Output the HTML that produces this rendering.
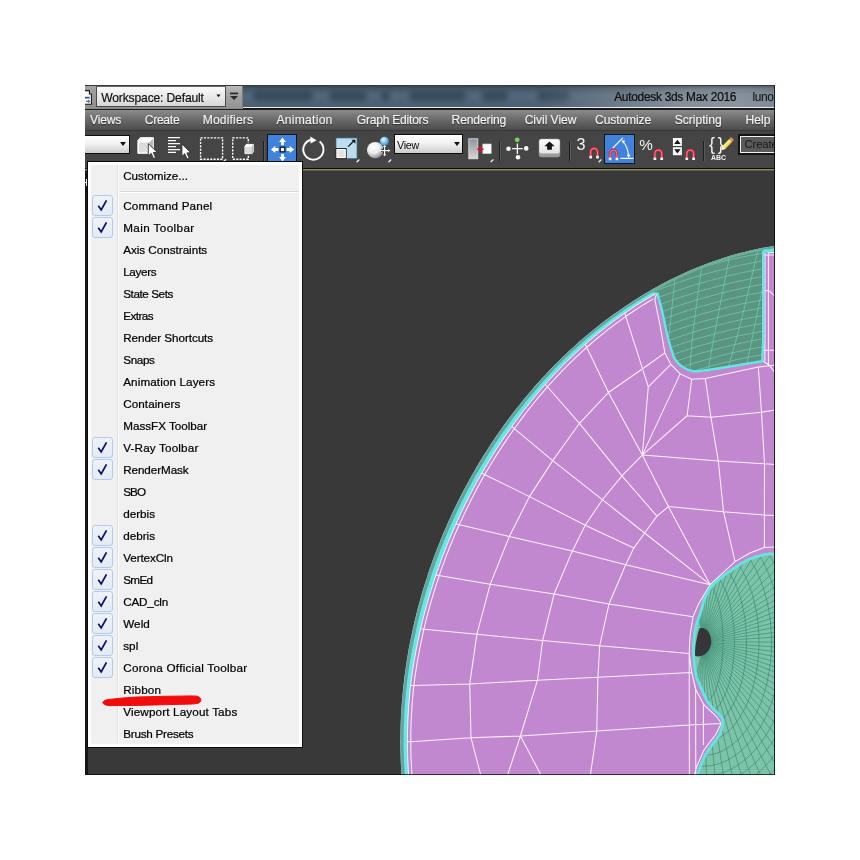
<!DOCTYPE html>
<html><head><meta charset="utf-8"><title>3ds Max toolbar menu</title>
<style>
html,body{margin:0;padding:0;background:#fff;}
body{width:860px;height:860px;position:relative;overflow:hidden;font-family:"Liberation Sans",sans-serif;font-size:12px;}
#app{position:absolute;left:85px;top:85px;width:690px;height:690px;overflow:hidden;background:#393939;}
#vp{position:absolute;left:0;top:0;}
.abs{position:absolute;}
/* title bar */
#title{position:absolute;left:0;top:0;width:690px;height:22px;background:linear-gradient(#4a5d6f,#50667a 50%,#43566a);overflow:hidden;}
#title .blob{position:absolute;top:6px;height:11px;background:#34475a;border-radius:5px;filter:blur(2.5px);opacity:.9}
#title .glow{position:absolute;left:455px;top:0;width:235px;height:22px;background:linear-gradient(to right,rgba(120,132,144,0) 0,rgba(120,132,144,.55) 28%,rgba(132,142,152,.92) 60%,rgba(136,146,155,.95) 85%,rgba(126,137,147,.9) 100%);}
#title .shade{position:absolute;left:158px;top:0;width:532px;height:22px;background:linear-gradient(rgba(20,28,36,.45) 0,rgba(20,28,36,.12) 18%,rgba(0,0,0,0) 40%,rgba(255,255,255,.06) 100%);}
#ttext{position:absolute;top:5px;color:#0b0b0b;-webkit-text-stroke:0.2px #0b0b0b;font-size:11.9px;white-space:nowrap;}
#tleft{position:absolute;left:0;top:0;width:158px;height:23.5px;background:linear-gradient(#a3a3a3,#8e8e8e);}
#topline{position:absolute;left:0;top:0;width:690px;height:1.3px;background:#33393f;}
#ws{position:absolute;left:11px;top:1px;width:130.4px;height:21.4px;background:linear-gradient(#fafafa,#e9e9e9 50%,#d6d6d6);border:1px solid #4a4a4a;border-top-color:#6a6a6a;box-sizing:border-box;border-radius:1px;}
#ws span{-webkit-text-stroke:0.2px #111;position:absolute;left:4.2px;top:3.8px;color:#111;white-space:nowrap;font-size:12.1px;}
#qa{position:absolute;left:141.4px;top:1px;width:16.4px;height:22px;background:linear-gradient(#b9b9b9,#a0a0a0 50%,#939393);border-right:1px solid #7a7a7a;box-sizing:border-box;}
#tline1{position:absolute;left:158px;top:21.5px;width:532px;height:1.3px;background:#e8ecef;}
#tline2{position:absolute;left:0;top:23px;width:690px;height:2px;background:#1a1a1a;}
/* menubar */
#menubar{position:absolute;left:0;top:25px;width:690px;height:20px;background:linear-gradient(#8c8c8c,#6c6c6c 45%,#4c4c4c);}
#menubar span{-webkit-text-stroke:0.15px #f4f4f4;position:absolute;top:3px;color:#f4f4f4;white-space:nowrap;font-size:12.1px;text-shadow:0 1px 1px rgba(0,0,0,.55);}
/* toolbar */
#toolbar{position:absolute;left:0;top:44.6px;width:690px;height:38.4px;background:#454545;border-top:1px solid #383838;box-sizing:border-box;}
#tbl1{position:absolute;left:0;top:83px;width:690px;height:1px;background:#0c0c0c;}
#tbl2{position:absolute;left:0;top:84px;width:690px;height:2px;background:linear-gradient(#a8a27c,#4a4620);}
.dd{position:absolute;background:linear-gradient(#ffffff,#f2f2f2 45%,#cdcdcd);border:1.9px solid #0d0d0d;border-right-width:1.2px;border-bottom-width:1.2px;box-sizing:border-box;height:20px;top:49.1px;}
.dd i{position:absolute;right:2.4px;top:6.6px;width:0;height:0;border-left:3.8px solid transparent;border-right:3.8px solid transparent;border-top:4.6px solid #111;}
.sep{position:absolute;top:56px;width:1px;height:20px;background:#1e1e1e;box-shadow:1px 0 0 #5a5a5a;}
.blue{position:absolute;background:#3f83dc;border:1.6px solid #141414;border-right-width:0.6px;box-sizing:border-box;}
/* popup */
#popup{position:absolute;left:3px;top:77px;width:214px;height:585px;background:#f0f0f0;border:1px solid #fff;box-sizing:border-box;box-shadow:0 0 0 1px #0c0c0c, inset 0 0 0 1.6px #fff, inset 0 0 2px 2px rgba(255,255,255,.7);}
#popup .gut{position:absolute;left:28px;top:2px;width:1px;height:579px;background:#e0e0e0;box-shadow:1px 0 0 #fff;}
#popup .hr{position:absolute;left:31px;top:28px;width:179px;height:1px;background:#d7d7d7;box-shadow:0 1px 0 #fff;}
.mi{position:absolute;left:34.2px;color:#000;-webkit-text-stroke:0.22px #000;white-space:nowrap;font-size:11.7px;line-height:14px;}
.ck{position:absolute;left:3px;width:21px;height:21px;border:1px solid #b3cbe8;border-radius:3px;box-sizing:border-box;background:linear-gradient(#eff3f9,#e4ebf6);}
.ck svg{position:absolute;left:0;top:0;}
</style></head><body>
<svg id="vp" width="860" height="860" viewBox="0 0 860 860">
<defs><clipPath id="cv"><rect x="85" y="171" width="690" height="604"/></clipPath>
<clipPath id="cdisc"><path d="M795.7,243.3 L791.0,243.8 L786.4,244.3 L781.7,244.8 L777.0,245.5 L772.4,246.2 L767.7,247.0 L763.1,247.8 L758.5,248.7 L753.9,249.7 L749.3,250.8 L744.7,251.9 L740.1,253.1 L735.6,254.3 L731.0,255.6 L726.5,257.0 L722.0,258.4 L717.5,259.9 L713.1,261.5 L708.6,263.1 L704.2,264.8 L699.8,266.5 L695.4,268.3 L691.1,270.1 L686.7,272.0 L682.4,274.0 L678.1,276.0 L673.9,278.0 L669.6,280.1 L665.4,282.3 L661.2,284.5 L657.1,286.7 L652.9,289.1 L648.8,291.4 L644.7,293.8 L640.7,296.3 L636.7,298.7 L632.7,301.3 L628.7,303.9 L624.8,306.5 L620.9,309.2 L617.0,311.9 L613.1,314.6 L609.3,317.4 L605.5,320.3 L601.8,323.1 L598.1,326.0 L594.4,329.0 L590.7,332.0 L587.1,335.0 L583.5,338.0 L579.9,341.1 L576.4,344.3 L572.9,347.4 L569.4,350.6 L566.0,353.9 L562.6,357.1 L559.2,360.4 L555.9,363.7 L552.6,367.1 L549.3,370.5 L546.1,373.9 L542.9,377.3 L539.7,380.8 L536.6,384.3 L533.5,387.8 L530.4,391.4 L527.4,395.0 L524.4,398.6 L521.4,402.2 L518.5,405.9 L515.6,409.6 L512.7,413.3 L509.9,417.0 L507.1,420.8 L504.3,424.6 L501.6,428.4 L498.9,432.2 L496.3,436.1 L493.6,439.9 L491.0,443.8 L488.5,447.7 L486.0,451.7 L483.5,455.6 L481.0,459.6 L478.6,463.6 L476.2,467.6 L473.9,471.7 L471.6,475.7 L469.3,479.8 L467.0,483.9 L464.8,488.0 L462.7,492.1 L460.5,496.2 L458.4,500.4 L456.4,504.6 L454.3,508.8 L452.3,513.0 L450.4,517.2 L448.4,521.5 L446.6,525.7 L444.7,530.0 L442.9,534.3 L441.1,538.6 L439.4,542.9 L437.6,547.2 L436.0,551.6 L434.3,555.9 L432.7,560.3 L431.2,564.7 L429.6,569.1 L428.1,573.5 L426.7,577.9 L425.3,582.3 L423.9,586.8 L422.5,591.2 L421.2,595.7 L420.0,600.2 L418.7,604.7 L417.5,609.2 L416.4,613.7 L415.3,618.2 L414.2,622.7 L413.2,627.3 L412.2,631.8 L411.2,636.4 L410.3,641.0 L409.4,645.5 L408.5,650.1 L407.7,654.7 L407.0,659.3 L406.3,663.9 L405.6,668.6 L404.9,673.2 L404.3,677.8 L403.8,682.4 L403.2,687.1 L402.8,691.7 L402.3,696.4 L401.9,701.0 L401.6,705.7 L401.3,710.4 L401.0,715.0 L400.8,719.7 L400.6,724.4 L400.5,729.0 L400.4,733.7 L400.3,738.4 L400.3,743.1 L400.3,747.8 L400.4,752.4 L400.6,757.1 L400.7,761.8 L401.0,766.5 L401.2,771.2 L401.5,775.9 L401.9,780.5 L402.3,785.2 L402.8,789.9 L403.3,794.5 L403.8,799.2 L790.0,790.0Z"/></clipPath>
<clipPath id="cinner"><path d="M790.0,553.0 L788.8,553.1 L787.2,553.2 L785.3,553.3 L783.1,553.5 L780.9,553.6 L778.8,553.8 L776.8,553.9 L775.0,554.0 L773.5,554.1 L772.2,554.1 L771.0,554.0 L769.8,554.0 L768.7,554.0 L767.5,554.1 L766.2,554.2 L764.7,554.5 L763.1,554.9 L761.3,555.3 L759.4,555.8 L757.5,556.3 L755.6,556.9 L753.7,557.6 L751.8,558.3 L750.0,559.0 L748.3,559.8 L746.6,560.6 L745.0,561.5 L743.4,562.4 L741.8,563.3 L740.2,564.3 L738.5,565.4 L736.8,566.5 L735.0,567.7 L733.1,568.9 L731.2,570.3 L729.2,571.6 L727.3,573.0 L725.4,574.4 L723.7,575.7 L722.0,577.0 L720.5,578.2 L719.0,579.4 L717.6,580.5 L716.3,581.7 L715.0,582.8 L713.8,584.0 L712.7,585.2 L711.6,586.5 L710.6,587.8 L709.6,589.2 L708.8,590.5 L707.9,591.9 L707.2,593.4 L706.4,594.9 L705.7,596.4 L705.0,598.0 L704.3,599.7 L703.7,601.5 L703.1,603.4 L702.6,605.3 L702.1,607.2 L701.5,609.1 L701.0,610.9 L700.5,612.6 L700.0,614.2 L699.4,615.7 L698.9,617.1 L698.4,618.5 L697.8,619.8 L697.4,621.2 L696.9,622.6 L696.5,624.0 L696.1,625.5 L695.8,626.9 L695.5,628.4 L695.2,629.8 L695.0,631.3 L694.7,632.8 L694.5,634.4 L694.3,636.0 L694.1,637.7 L693.9,639.3 L693.8,641.1 L693.6,642.9 L693.5,644.6 L693.5,646.4 L693.4,648.2 L693.4,650.0 L693.4,651.8 L693.5,653.6 L693.6,655.5 L693.7,657.3 L693.9,659.1 L694.0,660.9 L694.2,662.7 L694.4,664.4 L694.6,666.1 L694.8,667.8 L695.0,669.4 L695.2,671.1 L695.5,672.6 L695.7,674.1 L696.0,675.5 L696.3,676.8 L696.6,677.9 L696.9,678.8 L697.2,679.5 L697.5,680.2 L697.9,680.9 L698.3,681.7 L698.7,682.7 L699.3,683.9 L700.0,685.4 L700.7,687.3 L701.6,689.3 L702.5,691.4 L703.4,693.5 L704.3,695.5 L705.2,697.4 L706.0,699.0 L706.8,700.4 L707.5,701.6 L708.3,702.8 L709.0,703.8 L709.7,704.7 L710.5,705.7 L711.2,706.6 L712.0,707.5 L712.8,708.4 L713.7,709.3 L714.6,710.1 L715.6,711.0 L716.4,711.8 L717.3,712.5 L718.1,713.3 L718.8,714.0 L719.4,714.7 L720.0,715.4 L720.5,716.0 L721.0,716.7 L721.4,717.3 L721.8,717.9 L722.1,718.4 L722.4,719.0 L722.6,719.5 L722.8,720.0 L722.9,720.5 L722.9,721.0 L723.0,721.5 L723.0,722.0 L722.9,722.5 L722.9,723.0 L722.8,723.6 L722.8,724.1 L722.7,724.7 L722.5,725.4 L722.4,726.0 L722.2,726.6 L722.0,727.3 L721.8,728.0 L721.6,728.7 L721.4,729.5 L721.2,730.3 L720.9,731.1 L720.6,731.9 L720.3,732.8 L720.0,733.6 L719.6,734.4 L719.1,735.2 L718.6,736.0 L718.1,736.8 L717.5,737.6 L716.9,738.4 L716.3,739.2 L715.7,740.1 L715.0,741.0 L714.3,741.9 L713.6,742.9 L712.8,743.9 L712.1,744.9 L711.3,745.9 L710.5,746.9 L709.8,747.9 L709.1,749.0 L708.4,750.1 L707.7,751.2 L707.0,752.4 L706.4,753.5 L705.7,754.7 L705.1,755.8 L704.5,756.9 L704.0,758.0 L703.5,759.0 L703.1,759.9 L702.7,760.8 L702.3,761.6 L702.0,762.5 L701.6,763.3 L701.3,764.3 L700.9,765.3 L700.5,766.4 L700.1,767.4 L699.6,768.5 L699.2,769.7 L698.8,770.9 L698.4,772.1 L698.0,773.5 L697.7,775.0 L697.4,776.7 L697.1,778.7 L696.9,780.9 L696.7,783.1 L696.4,785.2 L696.3,787.2 L696.1,788.8 L696.0,790.0 L790.0,790.0Z"/></clipPath>
<clipPath id="cnotch"><path d="M657.3,292.6 L657.8,294.6 L658.5,297.3 L659.4,300.5 L660.3,304.0 L661.3,307.8 L662.2,311.6 L663.1,315.6 L664.1,320.1 L665.0,324.8 L666.0,329.4 L667.0,333.7 L667.9,337.6 L668.8,341.0 L669.7,344.1 L670.5,347.0 L671.3,349.5 L672.1,351.9 L672.8,353.9 L673.4,355.6 L673.9,356.9 L674.4,357.9 L674.9,358.8 L675.4,359.6 L676.0,360.5 L676.7,361.5 L677.5,362.4 L678.3,363.3 L679.2,364.1 L680.0,364.9 L680.9,365.6 L681.8,366.3 L682.6,366.9 L683.5,367.5 L684.5,368.0 L685.5,368.5 L686.5,369.0 L687.6,369.5 L688.6,369.9 L689.7,370.4 L691.0,370.7 L692.3,371.0 L693.9,371.2 L695.9,371.2 L698.3,371.1 L700.9,370.8 L703.3,370.6 L705.4,370.3 L706.9,370.2 L762.3,361.2 L763.2,340.0 L763.2,251.0 L763.2,240.0 L650.0,240.0 L650.0,292.0Z"/></clipPath>
</defs>
<g clip-path="url(#cv)">
<rect x="85" y="171" width="690" height="604" fill="#393939"/>
<path d="M795.7,243.3 L791.0,243.8 L786.4,244.3 L781.7,244.8 L777.0,245.5 L772.4,246.2 L767.7,247.0 L763.1,247.8 L758.5,248.7 L753.9,249.7 L749.3,250.8 L744.7,251.9 L740.1,253.1 L735.6,254.3 L731.0,255.6 L726.5,257.0 L722.0,258.4 L717.5,259.9 L713.1,261.5 L708.6,263.1 L704.2,264.8 L699.8,266.5 L695.4,268.3 L691.1,270.1 L686.7,272.0 L682.4,274.0 L678.1,276.0 L673.9,278.0 L669.6,280.1 L665.4,282.3 L661.2,284.5 L657.1,286.7 L652.9,289.1 L648.8,291.4 L644.7,293.8 L640.7,296.3 L636.7,298.7 L632.7,301.3 L628.7,303.9 L624.8,306.5 L620.9,309.2 L617.0,311.9 L613.1,314.6 L609.3,317.4 L605.5,320.3 L601.8,323.1 L598.1,326.0 L594.4,329.0 L590.7,332.0 L587.1,335.0 L583.5,338.0 L579.9,341.1 L576.4,344.3 L572.9,347.4 L569.4,350.6 L566.0,353.9 L562.6,357.1 L559.2,360.4 L555.9,363.7 L552.6,367.1 L549.3,370.5 L546.1,373.9 L542.9,377.3 L539.7,380.8 L536.6,384.3 L533.5,387.8 L530.4,391.4 L527.4,395.0 L524.4,398.6 L521.4,402.2 L518.5,405.9 L515.6,409.6 L512.7,413.3 L509.9,417.0 L507.1,420.8 L504.3,424.6 L501.6,428.4 L498.9,432.2 L496.3,436.1 L493.6,439.9 L491.0,443.8 L488.5,447.7 L486.0,451.7 L483.5,455.6 L481.0,459.6 L478.6,463.6 L476.2,467.6 L473.9,471.7 L471.6,475.7 L469.3,479.8 L467.0,483.9 L464.8,488.0 L462.7,492.1 L460.5,496.2 L458.4,500.4 L456.4,504.6 L454.3,508.8 L452.3,513.0 L450.4,517.2 L448.4,521.5 L446.6,525.7 L444.7,530.0 L442.9,534.3 L441.1,538.6 L439.4,542.9 L437.6,547.2 L436.0,551.6 L434.3,555.9 L432.7,560.3 L431.2,564.7 L429.6,569.1 L428.1,573.5 L426.7,577.9 L425.3,582.3 L423.9,586.8 L422.5,591.2 L421.2,595.7 L420.0,600.2 L418.7,604.7 L417.5,609.2 L416.4,613.7 L415.3,618.2 L414.2,622.7 L413.2,627.3 L412.2,631.8 L411.2,636.4 L410.3,641.0 L409.4,645.5 L408.5,650.1 L407.7,654.7 L407.0,659.3 L406.3,663.9 L405.6,668.6 L404.9,673.2 L404.3,677.8 L403.8,682.4 L403.2,687.1 L402.8,691.7 L402.3,696.4 L401.9,701.0 L401.6,705.7 L401.3,710.4 L401.0,715.0 L400.8,719.7 L400.6,724.4 L400.5,729.0 L400.4,733.7 L400.3,738.4 L400.3,743.1 L400.3,747.8 L400.4,752.4 L400.6,757.1 L400.7,761.8 L401.0,766.5 L401.2,771.2 L401.5,775.9 L401.9,780.5 L402.3,785.2 L402.8,789.9 L403.3,794.5 L403.8,799.2 L790.0,790.0Z" fill="#c288cf"/>
<g clip-path="url(#cdisc)"><path d="M414.2,798.0 L413.7,793.4 L413.2,788.8 L412.8,784.2 L412.4,779.7 L412.0,775.1 L411.7,770.5 L411.4,766.0 L411.2,761.4 L411.0,756.8 L410.9,752.2 L410.8,747.6 L410.8,743.0 L410.8,738.5 L410.8,733.9 L410.9,729.3 L411.0,724.7 L411.2,720.1 L411.4,715.6 L411.7,711.0 L412.0,706.4 L412.3,701.9 L412.7,697.3 L413.1,692.7 L413.6,688.2 L414.1,683.6 L414.7,679.1 L415.3,674.6 L416.0,670.1 L416.7,665.5 L417.5,661.0 L418.3,656.5 L419.1,652.0 L420.0,647.5 L420.9,643.1 L421.8,638.6 L422.8,634.1 L423.8,629.7 L424.8,625.2 L425.9,620.8 L427.0,616.4 L428.2,612.0 L429.4,607.6 L430.6,603.2 L431.9,598.8 L433.2,594.4 L434.6,590.0 L435.9,585.7 L437.3,581.4 L438.8,577.0 L440.2,572.7 L441.7,568.4 L443.3,564.1 L444.8,559.8 L446.4,555.5 L448.1,551.3 L449.8,547.0 L451.5,542.8 L453.2,538.6 L455.0,534.4 L456.8,530.2 L458.7,526.0 L460.6,521.9 L462.5,517.7 L464.4,513.6 L466.4,509.5 L468.4,505.4 L470.4,501.3 L472.5,497.2 L474.6,493.2 L476.7,489.1 L478.9,485.1 L481.1,481.1 L483.3,477.1 L485.6,473.1 L487.9,469.2 L490.3,465.2 L492.7,461.3 L495.1,457.4 L497.5,453.6 L500.0,449.7 L502.5,445.9 L505.1,442.1 L507.7,438.3 L510.3,434.5 L512.9,430.8 L515.6,427.0 L518.3,423.3 L521.0,419.6 L523.7,415.9 L526.5,412.3 L529.3,408.6 L532.2,405.0 L535.1,401.5 L538.0,397.9 L541.0,394.4 L544.0,390.9 L547.0,387.4 L550.1,383.9 L553.2,380.5 L556.3,377.1 L559.4,373.8 L562.6,370.4 L565.9,367.1 L569.1,363.9 L572.4,360.6 L575.8,357.4 L579.1,354.3 L582.5,351.1 L586.0,348.0 L589.5,345.0 L593.0,341.9 L596.5,339.0 L600.1,336.0 L603.7,333.1 L607.3,330.2 L610.9,327.4 L614.6,324.6 L618.3,321.8 L622.1,319.1 L625.9,316.4 L629.7,313.8 L633.5,311.2 L637.4,308.6 L641.3,306.1 L645.2,303.7 L649.2,301.3 L653.2,298.9 M654.7,299.2 L660.0,325.0 L664.9,352.9 L670.8,364.4 L680.2,373.9 L691.7,379.3 L705.3,378.5 L758.3,367.0 L769.8,365.7 L776.0,365.0 M664.9,352.9 L648.0,365.0 L608.5,392.5 L579.5,423.3 L552.7,460.6 L529.5,496.6 L509.3,536.5 L490.2,584.3 L476.9,634.2 L469.7,684.1 L471.0,737.8 L480.7,774.9 L484.0,790.0 M642.3,455.1 L621.9,475.8 L602.4,499.7 L585.2,525.3 L572.4,550.9 L554.1,594.0 L542.6,640.6 L537.5,680.2 L520.4,736.0 M520.4,736.0 L507.6,774.9 M520.4,736.0 L540.9,774.9 M668.4,506.6 L656.9,516.1 L644.6,533.0 L633.8,548.1 L625.7,564.7 L609.0,604.0 L599.7,645.7 L597.9,677.3 L596.8,730.9 L590.4,774.9 L588.0,790.0 M623.9,310.4 L626.0,317.1 L648.3,386.9 L642.3,455.1 M583.9,341.5 L586.9,347.8 L608.5,392.5 L642.3,455.1 M648.3,386.9 L670.8,364.4 M642.3,455.1 L680.2,373.9 M642.3,455.1 L687.1,415.7 L691.7,379.3 M687.1,415.7 L710.9,417.2 L761.5,412.2 L776.0,409.8 M705.3,378.5 L710.9,417.2 L718.3,461.0 L723.5,511.7 L735.0,561.6 M642.3,455.1 L718.3,461.0 L764.5,463.8 L776.0,464.6 M758.3,367.0 L761.5,412.2 L764.5,463.8 L764.4,515.0 L764.4,547.5 M642.3,455.1 L668.4,506.6 L710.2,584.7 M668.4,506.6 L723.5,511.7 L764.4,515.0 L776.0,515.5 M541.7,380.2 L546.3,385.5 L579.5,423.3 L621.9,475.8 L656.9,516.1 M508.6,423.8 L514.0,428.3 L552.7,460.6 L602.4,499.7 L644.6,533.0 L710.2,584.7 M477.2,470.9 L483.5,474.0 L529.5,496.6 L585.2,525.3 L633.8,548.1 M450.6,522.7 L457.4,524.3 L509.3,536.5 L572.4,550.9 L625.7,564.7 L710.2,584.7 M430.4,574.0 L437.3,575.2 L490.2,584.3 L554.1,594.0 L609.0,604.0 L693.0,616.8 M414.9,628.5 L421.9,629.1 L476.9,634.2 L542.6,640.6 L599.7,645.7 L689.2,653.4 M405.4,685.6 L412.4,685.4 L469.7,684.1 L537.5,680.2 L597.9,677.3 L691.7,672.6 M400.3,742.6 L407.3,742.1 L471.0,737.8 L520.4,736.0 L596.8,730.9 L689.2,725.0 L721.2,723.5 M776.0,547.0 L764.4,547.5 L750.0,553.0 L735.0,561.6 L710.2,584.7 L698.5,604.0 L693.0,616.8 L690.0,636.0 L689.2,653.4 L691.7,672.6 L696.0,690.0 L704.0,705.0 L716.5,716.5 L721.2,723.5 M721.2,723.5 L716.0,734.0 L704.0,750.0 L697.0,766.0 L694.0,776.0 M689.2,653.4 L689.4,776.0 M691.9,672.6 L695.6,690.0 L695.8,776.0 M703.4,705.0 L703.4,745.0 M764.9,251.0 L764.9,361.0 M768.4,251.0 L768.4,366.0 M764.0,252.4 L776.0,252.4 M764.0,255.0 L776.0,255.0 M764.0,290.8 L769.0,290.8 L776.0,297.0 M764.0,350.2 L776.0,350.2 M763.0,361.0 L769.8,365.7 L776.0,374.0 M654.7,299.2 L657.3,292.6" fill="none" stroke="#fbf0ff" stroke-width="1.05"/></g>
<g clip-path="url(#cdisc)"><path d="M795.7,243.3 L791.0,243.8 L786.4,244.3 L781.7,244.8 L777.0,245.5 L772.4,246.2 L767.7,247.0 L763.1,247.8 L758.5,248.7 L753.9,249.7 L749.3,250.8 L744.7,251.9 L740.1,253.1 L735.6,254.3 L731.0,255.6 L726.5,257.0 L722.0,258.4 L717.5,259.9 L713.1,261.5 L708.6,263.1 L704.2,264.8 L699.8,266.5 L695.4,268.3 L691.1,270.1 L686.7,272.0 L682.4,274.0 L678.1,276.0 L673.9,278.0 L669.6,280.1 L665.4,282.3 L661.2,284.5 L657.1,286.7 L652.9,289.1 L648.8,291.4 L644.7,293.8 L640.7,296.3 L636.7,298.7 L632.7,301.3 L628.7,303.9 L624.8,306.5 L620.9,309.2 L617.0,311.9 L613.1,314.6 L609.3,317.4 L605.5,320.3 L601.8,323.1 L598.1,326.0 L594.4,329.0 L590.7,332.0 L587.1,335.0 L583.5,338.0 L579.9,341.1 L576.4,344.3 L572.9,347.4 L569.4,350.6 L566.0,353.9 L562.6,357.1 L559.2,360.4 L555.9,363.7 L552.6,367.1 L549.3,370.5 L546.1,373.9 L542.9,377.3 L539.7,380.8 L536.6,384.3 L533.5,387.8 L530.4,391.4 L527.4,395.0 L524.4,398.6 L521.4,402.2 L518.5,405.9 L515.6,409.6 L512.7,413.3 L509.9,417.0 L507.1,420.8 L504.3,424.6 L501.6,428.4 L498.9,432.2 L496.3,436.1 L493.6,439.9 L491.0,443.8 L488.5,447.7 L486.0,451.7 L483.5,455.6 L481.0,459.6 L478.6,463.6 L476.2,467.6 L473.9,471.7 L471.6,475.7 L469.3,479.8 L467.0,483.9 L464.8,488.0 L462.7,492.1 L460.5,496.2 L458.4,500.4 L456.4,504.6 L454.3,508.8 L452.3,513.0 L450.4,517.2 L448.4,521.5 L446.6,525.7 L444.7,530.0 L442.9,534.3 L441.1,538.6 L439.4,542.9 L437.6,547.2 L436.0,551.6 L434.3,555.9 L432.7,560.3 L431.2,564.7 L429.6,569.1 L428.1,573.5 L426.7,577.9 L425.3,582.3 L423.9,586.8 L422.5,591.2 L421.2,595.7 L420.0,600.2 L418.7,604.7 L417.5,609.2 L416.4,613.7 L415.3,618.2 L414.2,622.7 L413.2,627.3 L412.2,631.8 L411.2,636.4 L410.3,641.0 L409.4,645.5 L408.5,650.1 L407.7,654.7 L407.0,659.3 L406.3,663.9 L405.6,668.6 L404.9,673.2 L404.3,677.8 L403.8,682.4 L403.2,687.1 L402.8,691.7 L402.3,696.4 L401.9,701.0 L401.6,705.7 L401.3,710.4 L401.0,715.0 L400.8,719.7 L400.6,724.4 L400.5,729.0 L400.4,733.7 L400.3,738.4 L400.3,743.1 L400.3,747.8 L400.4,752.4 L400.6,757.1 L400.7,761.8 L401.0,766.5 L401.2,771.2 L401.5,775.9 L401.9,780.5 L402.3,785.2 L402.8,789.9 L403.3,794.5 L403.8,799.2 L411.0,798.3 L410.4,793.7 L409.9,789.1 L409.5,784.5 L409.1,779.9 L408.7,775.3 L408.4,770.7 L408.1,766.1 L407.9,761.5 L407.7,756.9 L407.6,752.3 L407.5,747.7 L407.5,743.1 L407.5,738.4 L407.5,733.8 L407.6,729.2 L407.7,724.6 L407.9,720.0 L408.1,715.4 L408.4,710.8 L408.7,706.2 L409.0,701.6 L409.4,697.0 L409.8,692.4 L410.3,687.8 L410.8,683.3 L411.4,678.7 L412.1,674.1 L412.7,669.6 L413.5,665.0 L414.2,660.5 L415.0,656.0 L415.8,651.4 L416.7,646.9 L417.6,642.4 L418.6,637.9 L419.5,633.4 L420.6,629.0 L421.6,624.5 L422.7,620.0 L423.8,615.6 L425.0,611.1 L426.2,606.7 L427.5,602.3 L428.7,597.9 L430.0,593.5 L431.4,589.1 L432.8,584.7 L434.2,580.3 L435.6,576.0 L437.1,571.6 L438.6,567.3 L440.2,563.0 L441.7,558.7 L443.4,554.4 L445.0,550.1 L446.7,545.8 L448.4,541.6 L450.2,537.3 L452.0,533.1 L453.8,528.9 L455.7,524.7 L457.6,520.5 L459.5,516.3 L461.4,512.2 L463.4,508.0 L465.4,503.9 L467.5,499.8 L469.5,495.7 L471.7,491.6 L473.8,487.5 L476.0,483.5 L478.2,479.5 L480.5,475.5 L482.8,471.5 L485.1,467.5 L487.5,463.5 L489.9,459.6 L492.3,455.7 L494.7,451.8 L497.2,447.9 L499.8,444.1 L502.3,440.2 L504.9,436.4 L507.6,432.6 L510.2,428.8 L512.9,425.1 L515.6,421.3 L518.4,417.6 L521.1,413.9 L523.9,410.2 L526.8,406.6 L529.7,402.9 L532.6,399.3 L535.5,395.8 L538.5,392.2 L541.5,388.7 L544.6,385.2 L547.6,381.7 L550.7,378.3 L553.9,374.8 L557.1,371.5 L560.3,368.1 L563.5,364.8 L566.8,361.5 L570.1,358.2 L573.5,355.0 L576.9,351.8 L580.3,348.7 L583.8,345.6 L587.3,342.5 L590.8,339.4 L594.4,336.4 L598.0,333.4 L601.6,330.5 L605.3,327.6 L608.9,324.7 L612.7,321.9 L616.4,319.1 L620.2,316.4 L624.0,313.7 L627.8,311.0 L631.7,308.4 L635.6,305.8 L639.5,303.3 L643.5,300.9 L647.5,298.4 L651.5,296.1 L655.6,293.8 L659.7,291.5 L663.8,289.2 L667.9,287.1 L672.0,284.9 L676.2,282.9 L680.4,280.8 L684.7,278.9 L688.9,276.9 L693.2,275.1 L697.5,273.3 L701.8,271.5 L706.1,269.8 L710.5,268.2 L714.9,266.6 L719.3,265.0 L723.7,263.6 L728.1,262.2 L732.6,260.8 L737.0,259.5 L741.5,258.3 L746.0,257.1 L750.5,256.0 L755.0,255.0 L759.6,254.0 L764.1,253.1 L768.7,252.3 L773.2,251.5 L777.8,250.8 L782.4,250.2 L787.0,249.6 L791.6,249.1 L796.2,248.7Z" fill="#5fa79a"/><path d="M795.9,245.8 L791.3,246.2 L786.6,246.7 L782.0,247.3 L777.4,247.9 L772.8,248.6 L768.2,249.4 L763.6,250.3 L759.0,251.2 L754.4,252.2 L749.8,253.2 L745.3,254.3 L740.8,255.5 L736.2,256.7 L731.7,258.0 L727.2,259.4 L722.8,260.8 L718.3,262.3 L713.9,263.8 L709.5,265.4 L705.1,267.1 L700.7,268.8 L696.4,270.6 L692.0,272.4 L687.7,274.3 L683.4,276.2 L679.2,278.2 L674.9,280.2 L670.7,282.3 L666.5,284.5 L662.4,286.7 L658.3,288.9 L654.1,291.2 L650.1,293.6 L646.0,295.9 L642.0,298.4 L638.0,300.9 L634.0,303.4 L630.1,306.0 L626.2,308.6 L622.3,311.2 L618.5,314.0 L614.6,316.7 L610.9,319.5 L607.1,322.3 L603.4,325.2 L599.7,328.1 L596.0,331.0 L592.4,334.0 L588.8,337.0 L585.2,340.1 L581.7,343.2 L578.2,346.3 L574.7,349.5 L571.3,352.6 L567.9,355.9 L564.5,359.1 L561.2,362.4 L557.9,365.7 L554.7,369.1 L551.4,372.5 L548.2,375.9 L545.1,379.3 L541.9,382.8 L538.9,386.3 L535.8,389.9 L532.8,393.4 L529.8,397.0 L526.8,400.6 L523.9,404.2 L521.0,407.9 L518.1,411.6 L515.3,415.3 L512.5,419.0 L509.8,422.8 L507.1,426.5 L504.4,430.3 L501.7,434.1 L499.1,438.0 L496.5,441.8 L493.9,445.7 L491.4,449.6 L488.9,453.5 L486.4,457.5 L484.0,461.4 L481.6,465.4 L479.2,469.4 L476.9,473.4 L474.6,477.4 L472.4,481.5 L470.2,485.6 L468.0,489.6 L465.8,493.7 L463.7,497.9 L461.6,502.0 L459.6,506.2 L457.6,510.3 L455.6,514.5 L453.7,518.7 L451.8,522.9 L449.9,527.2 L448.0,531.4 L446.2,535.7 L444.5,539.9 L442.7,544.2 L441.0,548.5 L439.4,552.9 L437.7,557.2 L436.1,561.5 L434.6,565.9 L433.1,570.2 L431.6,574.6 L430.1,579.0 L428.7,583.4 L427.3,587.8 L426.0,592.3 L424.7,596.7 L423.4,601.1 L422.2,605.6 L421.0,610.1 L419.8,614.6 L418.7,619.0 L417.6,623.5 L416.6,628.1 L415.6,632.6 L414.6,637.1 L413.7,641.6 L412.8,646.2 L411.9,650.7 L411.1,655.3 L410.3,659.9 L409.6,664.4 L408.9,669.0 L408.2,673.6 L407.6,678.2 L407.0,682.8 L406.5,687.4 L406.0,692.0 L405.6,696.7 L405.2,701.3 L404.8,705.9 L404.5,710.6 L404.3,715.2 L404.1,719.8 L403.9,724.5 L403.7,729.1 L403.7,733.8 L403.6,738.4 L403.6,743.1 L403.6,747.7 L403.7,752.4 L403.9,757.0 L404.0,761.7 L404.3,766.3 L404.5,771.0 L404.8,775.6 L405.2,780.3 L405.6,784.9 L406.0,789.5 L406.5,794.2 L407.1,798.8 L411.0,798.3 L410.4,793.7 L409.9,789.1 L409.5,784.5 L409.1,779.9 L408.7,775.3 L408.4,770.7 L408.1,766.1 L407.9,761.5 L407.7,756.9 L407.6,752.3 L407.5,747.7 L407.5,743.1 L407.5,738.4 L407.5,733.8 L407.6,729.2 L407.7,724.6 L407.9,720.0 L408.1,715.4 L408.4,710.8 L408.7,706.2 L409.0,701.6 L409.4,697.0 L409.8,692.4 L410.3,687.8 L410.8,683.3 L411.4,678.7 L412.1,674.1 L412.7,669.6 L413.5,665.0 L414.2,660.5 L415.0,656.0 L415.8,651.4 L416.7,646.9 L417.6,642.4 L418.6,637.9 L419.5,633.4 L420.6,629.0 L421.6,624.5 L422.7,620.0 L423.8,615.6 L425.0,611.1 L426.2,606.7 L427.5,602.3 L428.7,597.9 L430.0,593.5 L431.4,589.1 L432.8,584.7 L434.2,580.3 L435.6,576.0 L437.1,571.6 L438.6,567.3 L440.2,563.0 L441.7,558.7 L443.4,554.4 L445.0,550.1 L446.7,545.8 L448.4,541.6 L450.2,537.3 L452.0,533.1 L453.8,528.9 L455.7,524.7 L457.6,520.5 L459.5,516.3 L461.4,512.2 L463.4,508.0 L465.4,503.9 L467.5,499.8 L469.5,495.7 L471.7,491.6 L473.8,487.5 L476.0,483.5 L478.2,479.5 L480.5,475.5 L482.8,471.5 L485.1,467.5 L487.5,463.5 L489.9,459.6 L492.3,455.7 L494.7,451.8 L497.2,447.9 L499.8,444.1 L502.3,440.2 L504.9,436.4 L507.6,432.6 L510.2,428.8 L512.9,425.1 L515.6,421.3 L518.4,417.6 L521.1,413.9 L523.9,410.2 L526.8,406.6 L529.7,402.9 L532.6,399.3 L535.5,395.8 L538.5,392.2 L541.5,388.7 L544.6,385.2 L547.6,381.7 L550.7,378.3 L553.9,374.8 L557.1,371.5 L560.3,368.1 L563.5,364.8 L566.8,361.5 L570.1,358.2 L573.5,355.0 L576.9,351.8 L580.3,348.7 L583.8,345.6 L587.3,342.5 L590.8,339.4 L594.4,336.4 L598.0,333.4 L601.6,330.5 L605.3,327.6 L608.9,324.7 L612.7,321.9 L616.4,319.1 L620.2,316.4 L624.0,313.7 L627.8,311.0 L631.7,308.4 L635.6,305.8 L639.5,303.3 L643.5,300.9 L647.5,298.4 L651.5,296.1 L655.6,293.8 L659.7,291.5 L663.8,289.2 L667.9,287.1 L672.0,284.9 L676.2,282.9 L680.4,280.8 L684.7,278.9 L688.9,276.9 L693.2,275.1 L697.5,273.3 L701.8,271.5 L706.1,269.8 L710.5,268.2 L714.9,266.6 L719.3,265.0 L723.7,263.6 L728.1,262.2 L732.6,260.8 L737.0,259.5 L741.5,258.3 L746.0,257.1 L750.5,256.0 L755.0,255.0 L759.6,254.0 L764.1,253.1 L768.7,252.3 L773.2,251.5 L777.8,250.8 L782.4,250.2 L787.0,249.6 L791.6,249.1 L796.2,248.7Z" fill="#66e6e6"/><path d="M795.7,243.3 L791.0,243.8 L786.4,244.3 L781.7,244.8 L777.0,245.5 L772.4,246.2 L767.7,247.0 L763.1,247.8 L758.5,248.7 L753.9,249.7 L749.3,250.8 L744.7,251.9 L740.1,253.1 L735.6,254.3 L731.0,255.6 L726.5,257.0 L722.0,258.4 L717.5,259.9 L713.1,261.5 L708.6,263.1 L704.2,264.8 L699.8,266.5 L695.4,268.3 L691.1,270.1 L686.7,272.0 L682.4,274.0 L678.1,276.0 L673.9,278.0 L669.6,280.1 L665.4,282.3 L661.2,284.5 L657.1,286.7 L652.9,289.1 L648.8,291.4 L644.7,293.8 L640.7,296.3 L636.7,298.7 L632.7,301.3 L628.7,303.9 L624.8,306.5 L620.9,309.2 L617.0,311.9 L613.1,314.6 L609.3,317.4 L605.5,320.3 L601.8,323.1 L598.1,326.0 L594.4,329.0 L590.7,332.0 L587.1,335.0 L583.5,338.0 L579.9,341.1 L576.4,344.3 L572.9,347.4 L569.4,350.6 L566.0,353.9 L562.6,357.1 L559.2,360.4 L555.9,363.7 L552.6,367.1 L549.3,370.5 L546.1,373.9 L542.9,377.3 L539.7,380.8 L536.6,384.3 L533.5,387.8 L530.4,391.4 L527.4,395.0 L524.4,398.6 L521.4,402.2 L518.5,405.9 L515.6,409.6 L512.7,413.3 L509.9,417.0 L507.1,420.8 L504.3,424.6 L501.6,428.4 L498.9,432.2 L496.3,436.1 L493.6,439.9 L491.0,443.8 L488.5,447.7 L486.0,451.7 L483.5,455.6 L481.0,459.6 L478.6,463.6 L476.2,467.6 L473.9,471.7 L471.6,475.7 L469.3,479.8 L467.0,483.9 L464.8,488.0 L462.7,492.1 L460.5,496.2 L458.4,500.4 L456.4,504.6 L454.3,508.8 L452.3,513.0 L450.4,517.2 L448.4,521.5 L446.6,525.7 L444.7,530.0 L442.9,534.3 L441.1,538.6 L439.4,542.9 L437.6,547.2 L436.0,551.6 L434.3,555.9 L432.7,560.3 L431.2,564.7 L429.6,569.1 L428.1,573.5 L426.7,577.9 L425.3,582.3 L423.9,586.8 L422.5,591.2 L421.2,595.7 L420.0,600.2 L418.7,604.7 L417.5,609.2 L416.4,613.7 L415.3,618.2 L414.2,622.7 L413.2,627.3 L412.2,631.8 L411.2,636.4 L410.3,641.0 L409.4,645.5 L408.5,650.1 L407.7,654.7 L407.0,659.3 L406.3,663.9 L405.6,668.6 L404.9,673.2 L404.3,677.8 L403.8,682.4 L403.2,687.1 L402.8,691.7 L402.3,696.4 L401.9,701.0 L401.6,705.7 L401.3,710.4 L401.0,715.0 L400.8,719.7 L400.6,724.4 L400.5,729.0 L400.4,733.7 L400.3,738.4 L400.3,743.1 L400.3,747.8 L400.4,752.4 L400.6,757.1 L400.7,761.8 L401.0,766.5 L401.2,771.2 L401.5,775.9 L401.9,780.5 L402.3,785.2 L402.8,789.9 L403.3,794.5 L403.8,799.2" fill="none" stroke="#8fd0c4" stroke-width="1.2" opacity=".55"/></g>
<g clip-path="url(#cdisc)"><path d="M655.6,293.8 L651.5,296.1 L647.5,298.4 L643.5,300.9 L639.5,303.3 L635.6,305.8 L631.7,308.4 L627.8,311.0 L624.0,313.7 L620.2,316.4 L616.4,319.1 L612.7,321.9 L608.9,324.7 L605.3,327.6 L601.6,330.5 L598.0,333.4 L594.4,336.4 L590.8,339.4 L587.3,342.5 L583.8,345.6 L580.3,348.7 L576.9,351.8 L573.5,355.0 L570.1,358.2 L566.8,361.5 L563.5,364.8 L560.3,368.1 L557.1,371.5 L553.9,374.8 L550.7,378.3 L547.6,381.7 L544.6,385.2 L541.5,388.7 L538.5,392.2 L535.5,395.8 L532.6,399.3 L529.7,402.9 L526.8,406.6 L523.9,410.2 L521.1,413.9 L518.4,417.6 L515.6,421.3 L512.9,425.1 L510.2,428.8 L507.6,432.6 L504.9,436.4 L502.3,440.2 L499.8,444.1 L497.2,447.9 L494.7,451.8 L492.3,455.7 L489.9,459.6 L487.5,463.5 L485.1,467.5 L482.8,471.5 L480.5,475.5 L478.2,479.5 L476.0,483.5 L473.8,487.5 L471.7,491.6 L469.5,495.7 L467.5,499.8 L465.4,503.9 L463.4,508.0 L461.4,512.2 L459.5,516.3 L457.6,520.5 L455.7,524.7 L453.8,528.9 L452.0,533.1 L450.2,537.3 L448.4,541.6 L446.7,545.8 L445.0,550.1 L443.4,554.4 L441.7,558.7 L440.2,563.0 L438.6,567.3 L437.1,571.6 L435.6,576.0 L434.2,580.3 L432.8,584.7 L431.4,589.1 L430.0,593.5 L428.7,597.9 L427.5,602.3 L426.2,606.7 L425.0,611.1 L423.8,615.6 L422.7,620.0 L421.6,624.5 L420.6,629.0 L419.5,633.4 L418.6,637.9 L417.6,642.4 L416.7,646.9 L415.8,651.4 L415.0,656.0 L414.2,660.5 L413.5,665.0 L412.7,669.6 L412.1,674.1 L411.4,678.7 L410.8,683.3 L410.3,687.8 L409.8,692.4 L409.4,697.0 L409.0,701.6 L408.7,706.2 L408.4,710.8 L408.1,715.4 L407.9,720.0 L407.7,724.6 L407.6,729.2 L407.5,733.8 L407.5,738.4 L407.5,743.1 L407.5,747.7 L407.6,752.3 L407.7,756.9 L407.9,761.5 L408.1,766.1 L408.4,770.7 L408.7,775.3 L409.1,779.9 L409.5,784.5 L409.9,789.1 L410.4,793.7 L411.0,798.3" fill="none" stroke="#fbf0ff" stroke-width="1.0"/></g>
<g clip-path="url(#cdisc)"><path d="M657.3,292.6 L657.8,294.6 L658.5,297.3 L659.4,300.5 L660.3,304.0 L661.3,307.8 L662.2,311.6 L663.1,315.6 L664.1,320.1 L665.0,324.8 L666.0,329.4 L667.0,333.7 L667.9,337.6 L668.8,341.0 L669.7,344.1 L670.5,347.0 L671.3,349.5 L672.1,351.9 L672.8,353.9 L673.4,355.6 L673.9,356.9 L674.4,357.9 L674.9,358.8 L675.4,359.6 L676.0,360.5 L676.7,361.5 L677.5,362.4 L678.3,363.3 L679.2,364.1 L680.0,364.9 L680.9,365.6 L681.8,366.3 L682.6,366.9 L683.5,367.5 L684.5,368.0 L685.5,368.5 L686.5,369.0 L687.6,369.5 L688.6,369.9 L689.7,370.4 L691.0,370.7 L692.3,371.0 L693.9,371.2 L695.9,371.2 L698.3,371.1 L700.9,370.8 L703.3,370.6 L705.4,370.3 L706.9,370.2 L762.3,361.2 L763.2,340.0 L763.2,251.0 L763.2,240.0 L650.0,240.0 L650.0,292.0Z" fill="#5b9481"/>
<g clip-path="url(#cnotch)"><path d="M650.0,261.4 L657.2,258.8 L667.5,255.1 L679.1,251.0 L690.0,247.4 L700.1,244.3 L710.4,241.5 L720.4,238.8 L730.0,236.4 L739.7,234.2 L749.5,232.2 L758.0,230.6 L764.0,229.4 M650.0,269.2 L657.2,266.6 L667.5,262.9 L679.1,258.8 L690.0,255.2 L700.1,252.1 L710.4,249.3 L720.4,246.6 L730.0,244.2 L739.7,242.0 L749.5,240.0 L758.0,238.4 L764.0,237.2 M650.0,277.0 L657.2,274.4 L667.5,270.7 L679.1,266.6 L690.0,263.0 L700.1,259.9 L710.4,257.1 L720.4,254.4 L730.0,252.0 L739.7,249.8 L749.5,247.8 L758.0,246.2 L764.0,245.0 M650.0,284.8 L657.2,282.2 L667.5,278.5 L679.1,274.4 L690.0,270.8 L700.1,267.7 L710.4,264.9 L720.4,262.2 L730.0,259.8 L739.7,257.6 L749.5,255.6 L758.0,254.0 L764.0,252.8 M650.0,292.6 L657.2,290.0 L667.5,286.3 L679.1,282.2 L690.0,278.6 L700.1,275.5 L710.4,272.7 L720.4,270.0 L730.0,267.6 L739.7,265.4 L749.5,263.4 L758.0,261.8 L764.0,260.6 M650.0,300.4 L657.2,297.8 L667.5,294.1 L679.1,290.0 L690.0,286.4 L700.1,283.3 L710.4,280.5 L720.4,277.8 L730.0,275.4 L739.7,273.2 L749.5,271.2 L758.0,269.6 L764.0,268.4 M650.0,308.2 L657.2,305.6 L667.5,301.9 L679.1,297.8 L690.0,294.2 L700.1,291.1 L710.4,288.3 L720.4,285.6 L730.0,283.2 L739.7,281.0 L749.5,279.0 L758.0,277.4 L764.0,276.2 M650.0,316.0 L657.2,313.4 L667.5,309.7 L679.1,305.6 L690.0,302.0 L700.1,298.9 L710.4,296.1 L720.4,293.4 L730.0,291.0 L739.7,288.8 L749.5,286.8 L758.0,285.2 L764.0,284.0 M650.0,323.8 L657.2,321.2 L667.5,317.5 L679.1,313.4 L690.0,309.8 L700.1,306.7 L710.4,303.9 L720.4,301.2 L730.0,298.8 L739.7,296.6 L749.5,294.6 L758.0,293.0 L764.0,291.8 M650.0,331.6 L657.2,329.0 L667.5,325.3 L679.1,321.2 L690.0,317.6 L700.1,314.5 L710.4,311.7 L720.4,309.0 L730.0,306.6 L739.7,304.4 L749.5,302.4 L758.0,300.8 L764.0,299.6 M650.0,339.4 L657.2,336.8 L667.5,333.1 L679.1,329.0 L690.0,325.4 L700.1,322.3 L710.4,319.5 L720.4,316.8 L730.0,314.4 L739.7,312.2 L749.5,310.2 L758.0,308.6 L764.0,307.4 M650.0,347.2 L657.2,344.6 L667.5,340.9 L679.1,336.8 L690.0,333.2 L700.1,330.1 L710.4,327.3 L720.4,324.6 L730.0,322.2 L739.7,320.0 L749.5,318.0 L758.0,316.4 L764.0,315.2 M650.0,355.0 L657.2,352.4 L667.5,348.7 L679.1,344.6 L690.0,341.0 L700.1,337.9 L710.4,335.1 L720.4,332.4 L730.0,330.0 L739.7,327.8 L749.5,325.8 L758.0,324.2 L764.0,323.0 M650.0,362.8 L657.2,360.2 L667.5,356.5 L679.1,352.4 L690.0,348.8 L700.1,345.7 L710.4,342.9 L720.4,340.2 L730.0,337.8 L739.7,335.6 L749.5,333.6 L758.0,332.0 L764.0,330.8 M650.0,370.6 L657.2,368.0 L667.5,364.3 L679.1,360.2 L690.0,356.6 L700.1,353.5 L710.4,350.7 L720.4,348.0 L730.0,345.6 L739.7,343.4 L749.5,341.4 L758.0,339.8 L764.0,338.6 M650.0,378.4 L657.2,375.8 L667.5,372.1 L679.1,368.0 L690.0,364.4 L700.1,361.3 L710.4,358.5 L720.4,355.8 L730.0,353.4 L739.7,351.2 L749.5,349.2 L758.0,347.6 L764.0,346.4 M650.0,386.2 L657.2,383.6 L667.5,379.9 L679.1,375.8 L690.0,372.2 L700.1,369.1 L710.4,366.3 L720.4,363.6 L730.0,361.2 L739.7,359.0 L749.5,357.0 L758.0,355.4 L764.0,354.2 M675.2,277.0 L674.1,287.8 L672.4,303.4 L670.8,319.4 L669.5,331.0 L668.8,336.6 L668.4,338.9 L668.2,339.4 L668.0,340.0 M702.1,264.4 L700.3,277.0 L697.8,295.1 L695.2,314.6 L693.1,331.0 L691.8,344.0 L690.9,355.7 L690.3,365.2 L689.9,372.0 M729.7,255.5 L726.9,269.9 L722.9,290.7 L718.6,312.8 L715.1,331.0 L712.6,344.6 L710.5,356.2 L708.9,365.4 L707.8,372.0 M758.2,249.0 L755.0,262.5 L750.5,282.1 L745.5,303.1 L741.1,321.0 L737.3,335.6 L733.5,349.0 L730.3,360.1 L728.1,368.0 M762.3,288.8 L759.3,303.3 L755.0,324.4 L750.6,345.6 L747.6,360.4 L746.4,366.2 L746.4,366.7 L746.8,364.9 L747.0,364.0" fill="none" stroke="#78e2c6" stroke-width="0.85" opacity="0.62"/><path d="M795.7,243.3 L791.0,243.8 L786.4,244.3 L781.7,244.8 L777.0,245.5 L772.4,246.2 L767.7,247.0 L763.1,247.8 L758.5,248.7 L753.9,249.7 L749.3,250.8 L744.7,251.9 L740.1,253.1 L735.6,254.3 L731.0,255.6 L726.5,257.0 L722.0,258.4 L717.5,259.9 L713.1,261.5 L708.6,263.1 L704.2,264.8 L699.8,266.5 L695.4,268.3 L691.1,270.1 L686.7,272.0 L682.4,274.0 L678.1,276.0 L673.9,278.0 L669.6,280.1 L665.4,282.3 L661.2,284.5 L657.1,286.7 L652.9,289.1 L648.8,291.4 L644.7,293.8 L640.7,296.3 L636.7,298.7 L632.7,301.3 L628.7,303.9 L624.8,306.5 L620.9,309.2 L617.0,311.9 L613.1,314.6 L609.3,317.4 L605.5,320.3 L601.8,323.1 L598.1,326.0 L594.4,329.0 L590.7,332.0 L587.1,335.0 L583.5,338.0 L579.9,341.1 L576.4,344.3 L572.9,347.4 L569.4,350.6 L566.0,353.9 L562.6,357.1 L559.2,360.4 L555.9,363.7 L552.6,367.1 L549.3,370.5 L546.1,373.9 L542.9,377.3 L539.7,380.8 L536.6,384.3 L533.5,387.8 L530.4,391.4 L527.4,395.0 L524.4,398.6 L521.4,402.2 L518.5,405.9 L515.6,409.6 L512.7,413.3 L509.9,417.0 L507.1,420.8 L504.3,424.6 L501.6,428.4 L498.9,432.2 L496.3,436.1 L493.6,439.9 L491.0,443.8 L488.5,447.7 L486.0,451.7 L483.5,455.6 L481.0,459.6 L478.6,463.6 L476.2,467.6 L473.9,471.7 L471.6,475.7 L469.3,479.8 L467.0,483.9 L464.8,488.0 L462.7,492.1 L460.5,496.2 L458.4,500.4 L456.4,504.6 L454.3,508.8 L452.3,513.0 L450.4,517.2 L448.4,521.5 L446.6,525.7 L444.7,530.0 L442.9,534.3 L441.1,538.6 L439.4,542.9 L437.6,547.2 L436.0,551.6 L434.3,555.9 L432.7,560.3 L431.2,564.7 L429.6,569.1 L428.1,573.5 L426.7,577.9 L425.3,582.3 L423.9,586.8 L422.5,591.2 L421.2,595.7 L420.0,600.2 L418.7,604.7 L417.5,609.2 L416.4,613.7 L415.3,618.2 L414.2,622.7 L413.2,627.3 L412.2,631.8 L411.2,636.4 L410.3,641.0 L409.4,645.5 L408.5,650.1 L407.7,654.7 L407.0,659.3 L406.3,663.9 L405.6,668.6 L404.9,673.2 L404.3,677.8 L403.8,682.4 L403.2,687.1 L402.8,691.7 L402.3,696.4 L401.9,701.0 L401.6,705.7 L401.3,710.4 L401.0,715.0 L400.8,719.7 L400.6,724.4 L400.5,729.0 L400.4,733.7 L400.3,738.4 L400.3,743.1 L400.3,747.8 L400.4,752.4 L400.6,757.1 L400.7,761.8 L401.0,766.5 L401.2,771.2 L401.5,775.9 L401.9,780.5 L402.3,785.2 L402.8,789.9 L403.3,794.5 L403.8,799.2" fill="none" stroke="#6fae98" stroke-width="5"/></g>
</g>
<path d="M790.0,553.0 L788.8,553.1 L787.2,553.2 L785.3,553.3 L783.1,553.5 L780.9,553.6 L778.8,553.8 L776.8,553.9 L775.0,554.0 L773.5,554.1 L772.2,554.1 L771.0,554.0 L769.8,554.0 L768.7,554.0 L767.5,554.1 L766.2,554.2 L764.7,554.5 L763.1,554.9 L761.3,555.3 L759.4,555.8 L757.5,556.3 L755.6,556.9 L753.7,557.6 L751.8,558.3 L750.0,559.0 L748.3,559.8 L746.6,560.6 L745.0,561.5 L743.4,562.4 L741.8,563.3 L740.2,564.3 L738.5,565.4 L736.8,566.5 L735.0,567.7 L733.1,568.9 L731.2,570.3 L729.2,571.6 L727.3,573.0 L725.4,574.4 L723.7,575.7 L722.0,577.0 L720.5,578.2 L719.0,579.4 L717.6,580.5 L716.3,581.7 L715.0,582.8 L713.8,584.0 L712.7,585.2 L711.6,586.5 L710.6,587.8 L709.6,589.2 L708.8,590.5 L707.9,591.9 L707.2,593.4 L706.4,594.9 L705.7,596.4 L705.0,598.0 L704.3,599.7 L703.7,601.5 L703.1,603.4 L702.6,605.3 L702.1,607.2 L701.5,609.1 L701.0,610.9 L700.5,612.6 L700.0,614.2 L699.4,615.7 L698.9,617.1 L698.4,618.5 L697.8,619.8 L697.4,621.2 L696.9,622.6 L696.5,624.0 L696.1,625.5 L695.8,626.9 L695.5,628.4 L695.2,629.8 L695.0,631.3 L694.7,632.8 L694.5,634.4 L694.3,636.0 L694.1,637.7 L693.9,639.3 L693.8,641.1 L693.6,642.9 L693.5,644.6 L693.5,646.4 L693.4,648.2 L693.4,650.0 L693.4,651.8 L693.5,653.6 L693.6,655.5 L693.7,657.3 L693.9,659.1 L694.0,660.9 L694.2,662.7 L694.4,664.4 L694.6,666.1 L694.8,667.8 L695.0,669.4 L695.2,671.1 L695.5,672.6 L695.7,674.1 L696.0,675.5 L696.3,676.8 L696.6,677.9 L696.9,678.8 L697.2,679.5 L697.5,680.2 L697.9,680.9 L698.3,681.7 L698.7,682.7 L699.3,683.9 L700.0,685.4 L700.7,687.3 L701.6,689.3 L702.5,691.4 L703.4,693.5 L704.3,695.5 L705.2,697.4 L706.0,699.0 L706.8,700.4 L707.5,701.6 L708.3,702.8 L709.0,703.8 L709.7,704.7 L710.5,705.7 L711.2,706.6 L712.0,707.5 L712.8,708.4 L713.7,709.3 L714.6,710.1 L715.6,711.0 L716.4,711.8 L717.3,712.5 L718.1,713.3 L718.8,714.0 L719.4,714.7 L720.0,715.4 L720.5,716.0 L721.0,716.7 L721.4,717.3 L721.8,717.9 L722.1,718.4 L722.4,719.0 L722.6,719.5 L722.8,720.0 L722.9,720.5 L722.9,721.0 L723.0,721.5 L723.0,722.0 L722.9,722.5 L722.9,723.0 L722.8,723.6 L722.8,724.1 L722.7,724.7 L722.5,725.4 L722.4,726.0 L722.2,726.6 L722.0,727.3 L721.8,728.0 L721.6,728.7 L721.4,729.5 L721.2,730.3 L720.9,731.1 L720.6,731.9 L720.3,732.8 L720.0,733.6 L719.6,734.4 L719.1,735.2 L718.6,736.0 L718.1,736.8 L717.5,737.6 L716.9,738.4 L716.3,739.2 L715.7,740.1 L715.0,741.0 L714.3,741.9 L713.6,742.9 L712.8,743.9 L712.1,744.9 L711.3,745.9 L710.5,746.9 L709.8,747.9 L709.1,749.0 L708.4,750.1 L707.7,751.2 L707.0,752.4 L706.4,753.5 L705.7,754.7 L705.1,755.8 L704.5,756.9 L704.0,758.0 L703.5,759.0 L703.1,759.9 L702.7,760.8 L702.3,761.6 L702.0,762.5 L701.6,763.3 L701.3,764.3 L700.9,765.3 L700.5,766.4 L700.1,767.4 L699.6,768.5 L699.2,769.7 L698.8,770.9 L698.4,772.1 L698.0,773.5 L697.7,775.0 L697.4,776.7 L697.1,778.7 L696.9,780.9 L696.7,783.1 L696.4,785.2 L696.3,787.2 L696.1,788.8 L696.0,790.0 L790.0,790.0Z" fill="#7cc3aa"/>
<g clip-path="url(#cinner)"><path d="M703.5,638.1 L642.8,389.2 M703.5,638.1 L659.2,385.8 M703.5,638.0 L675.8,383.5 M703.5,638.0 L692.6,382.2 M703.5,638.0 L709.3,382.1 M703.5,638.0 L726.1,383.0 M703.5,638.0 L742.7,385.0 M703.5,638.1 L759.2,388.0 M703.5,638.2 L775.5,392.2 M703.5,638.2 L791.4,397.3 M703.5,638.3 L807.0,403.5 M703.5,638.4 L822.2,410.7 M703.5,638.6 L836.9,418.8 M703.5,638.7 L851.0,427.9 M703.5,638.9 L864.5,437.8 M703.5,639.0 L877.3,448.6 M703.5,639.2 L889.4,460.2 M703.5,639.4 L900.7,472.6 M703.5,639.6 L911.2,485.7 M703.5,639.8 L920.9,499.4 M703.5,640.0 L929.6,513.7 M703.5,640.3 L937.4,528.5 M703.5,640.5 L944.3,543.9 M703.5,640.7 L950.1,559.6 M703.5,641.0 L954.9,575.6 M703.5,641.2 L958.6,592.0 M703.5,641.5 L961.3,608.5 M703.5,641.7 L963.0,625.2 M703.5,642.0 L963.5,642.0 M703.5,642.3 L963.0,658.8 M703.5,642.5 L961.3,675.5 M703.5,642.8 L958.6,692.0 M703.5,643.0 L954.9,708.4 M703.5,643.3 L950.1,724.4 M703.5,643.5 L944.3,740.1 M703.5,643.7 L937.4,755.5 M703.5,644.0 L929.6,770.3 M703.5,644.2 L920.9,784.6 M703.5,644.4 L911.2,798.3 M703.5,644.6 L900.7,811.4 M703.5,644.8 L889.4,823.8 M703.5,645.0 L877.3,835.4 M703.5,645.1 L864.5,846.2 M703.5,645.3 L851.0,856.1 M703.5,645.4 L836.9,865.2 M703.5,645.6 L822.2,873.3 M703.5,645.7 L807.0,880.5 M703.5,645.8 L791.4,886.7 M703.5,645.8 L775.5,891.8 M703.5,645.9 L759.2,896.0 M703.5,646.0 L742.7,899.0 M703.5,646.0 L726.1,901.0 M703.5,646.0 L709.3,901.9 M703.5,646.0 L692.6,901.8 M703.5,646.0 L675.8,900.5 M703.5,645.9 L659.2,898.2 M703.5,645.9 L642.8,894.8 M684.0,642.0 A19.5,61.1 0 1 1 723.0,642.0 A19.5,61.1 0 1 1 684.0,642.0 M672.5,642.0 A31.0,73.5 0 1 1 734.5,642.0 A31.0,73.5 0 1 1 672.5,642.0 M660.5,642.0 A43.0,86.4 0 1 1 746.5,642.0 A43.0,86.4 0 1 1 660.5,642.0 M648.0,642.0 A55.5,99.9 0 1 1 759.0,642.0 A55.5,99.9 0 1 1 648.0,642.0 M635.5,642.0 A68.0,113.4 0 1 1 771.5,642.0 A68.0,113.4 0 1 1 635.5,642.0 M625.5,642.0 A78.0,124.2 0 1 1 781.5,642.0 A78.0,124.2 0 1 1 625.5,642.0 M616.5,642.0 A87.0,134.0 0 1 1 790.5,642.0 A87.0,134.0 0 1 1 616.5,642.0 M607.5,642.0 A96.0,143.7 0 1 1 799.5,642.0 A96.0,143.7 0 1 1 607.5,642.0 M598.5,642.0 A105.0,153.4 0 1 1 808.5,642.0 A105.0,153.4 0 1 1 598.5,642.0 M589.5,642.0 A114.0,163.1 0 1 1 817.5,642.0 A114.0,163.1 0 1 1 589.5,642.0 M580.5,642.0 A123.0,172.8 0 1 1 826.5,642.0 A123.0,172.8 0 1 1 580.5,642.0 M571.5,642.0 A132.0,182.6 0 1 1 835.5,642.0 A132.0,182.6 0 1 1 571.5,642.0" fill="none" stroke="#2f8266" stroke-width="0.8" opacity="0.7"/></g>
<path d="M695.2,656 C694.5,650 696.5,636 699.5,628.5 C706,626 711.5,634 711.3,642 C711.2,650 704,658.5 695.2,656Z" fill="#35353a"/>
<path d="M790.0,553.0 L788.8,553.1 L787.2,553.2 L785.3,553.3 L783.1,553.5 L780.9,553.6 L778.8,553.8 L776.8,553.9 L775.0,554.0 L773.5,554.1 L772.2,554.1 L771.0,554.0 L769.8,554.0 L768.7,554.0 L767.5,554.1 L766.2,554.2 L764.7,554.5 L763.1,554.9 L761.3,555.3 L759.4,555.8 L757.5,556.3 L755.6,556.9 L753.7,557.6 L751.8,558.3 L750.0,559.0 L748.3,559.8 L746.6,560.6 L745.0,561.5 L743.4,562.4 L741.8,563.3 L740.2,564.3 L738.5,565.4 L736.8,566.5 L735.0,567.7 L733.1,568.9 L731.2,570.3 L729.2,571.6 L727.3,573.0 L725.4,574.4 L723.7,575.7 L722.0,577.0 L720.5,578.2 L719.0,579.4 L717.6,580.5 L716.3,581.7 L715.0,582.8 L713.8,584.0 L712.7,585.2 L711.6,586.5 L710.6,587.8 L709.6,589.2 L708.8,590.5 L707.9,591.9 L707.2,593.4 L706.4,594.9 L705.7,596.4 L705.0,598.0 L704.3,599.7 L703.7,601.5 L703.1,603.4 L702.6,605.3 L702.1,607.2 L701.5,609.1 L701.0,610.9 L700.5,612.6 L700.0,614.2 L699.4,615.7 L698.9,617.1 L698.4,618.5 L697.8,619.8 L697.4,621.2 L696.9,622.6 L696.5,624.0 L696.1,625.5 L695.8,626.9 L695.5,628.4 L695.2,629.8 L695.0,631.3 L694.7,632.8 L694.5,634.4 L694.3,636.0 L694.1,637.7 L693.9,639.3 L693.8,641.1 L693.6,642.9 L693.5,644.6 L693.5,646.4 L693.4,648.2 L693.4,650.0 L693.4,651.8 L693.5,653.6 L693.6,655.5 L693.7,657.3 L693.9,659.1 L694.0,660.9 L694.2,662.7 L694.4,664.4 L694.6,666.1 L694.8,667.8 L695.0,669.4 L695.2,671.1 L695.5,672.6 L695.7,674.1 L696.0,675.5 L696.3,676.8 L696.6,677.9 L696.9,678.8 L697.2,679.5 L697.5,680.2 L697.9,680.9 L698.3,681.7 L698.7,682.7 L699.3,683.9 L700.0,685.4 L700.7,687.3 L701.6,689.3 L702.5,691.4 L703.4,693.5 L704.3,695.5 L705.2,697.4 L706.0,699.0 L706.8,700.4 L707.5,701.6 L708.3,702.8 L709.0,703.8 L709.7,704.7 L710.5,705.7 L711.2,706.6 L712.0,707.5 L712.8,708.4 L713.7,709.3 L714.6,710.1 L715.6,711.0 L716.4,711.8 L717.3,712.5 L718.1,713.3 L718.8,714.0 L719.4,714.7 L720.0,715.4 L720.5,716.0 L721.0,716.7 L721.4,717.3 L721.8,717.9 L722.1,718.4 L722.4,719.0 L722.6,719.5 L722.8,720.0 L722.9,720.5 L722.9,721.0 L723.0,721.5 L723.0,722.0 L722.9,722.5 L722.9,723.0 L722.8,723.6 L722.8,724.1 L722.7,724.7 L722.5,725.4 L722.4,726.0 L722.2,726.6 L722.0,727.3 L721.8,728.0 L721.6,728.7 L721.4,729.5 L721.2,730.3 L720.9,731.1 L720.6,731.9 L720.3,732.8 L720.0,733.6 L719.6,734.4 L719.1,735.2 L718.6,736.0 L718.1,736.8 L717.5,737.6 L716.9,738.4 L716.3,739.2 L715.7,740.1 L715.0,741.0 L714.3,741.9 L713.6,742.9 L712.8,743.9 L712.1,744.9 L711.3,745.9 L710.5,746.9 L709.8,747.9 L709.1,749.0 L708.4,750.1 L707.7,751.2 L707.0,752.4 L706.4,753.5 L705.7,754.7 L705.1,755.8 L704.5,756.9 L704.0,758.0 L703.5,759.0 L703.1,759.9 L702.7,760.8 L702.3,761.6 L702.0,762.5 L701.6,763.3 L701.3,764.3 L700.9,765.3 L700.5,766.4 L700.1,767.4 L699.6,768.5 L699.2,769.7 L698.8,770.9 L698.4,772.1 L698.0,773.5 L697.7,775.0 L697.4,776.7 L697.1,778.7 L696.9,780.9 L696.7,783.1 L696.4,785.2 L696.3,787.2 L696.1,788.8 L696.0,790.0" fill="none" stroke="#66e4e4" stroke-width="2.8"/>
<path d="M657.3,292.6 L657.8,294.6 L658.5,297.3 L659.4,300.5 L660.3,304.0 L661.3,307.8 L662.2,311.6 L663.1,315.6 L664.1,320.1 L665.0,324.8 L666.0,329.4 L667.0,333.7 L667.9,337.6 L668.8,341.0 L669.7,344.1 L670.5,347.0 L671.3,349.5 L672.1,351.9 L672.8,353.9 L673.4,355.6 L673.9,356.9 L674.4,357.9 L674.9,358.8 L675.4,359.6 L676.0,360.5 L676.7,361.5 L677.5,362.4 L678.3,363.3 L679.2,364.1 L680.0,364.9 L680.9,365.6 L681.8,366.3 L682.6,366.9 L683.5,367.5 L684.5,368.0 L685.5,368.5 L686.5,369.0 L687.6,369.5 L688.6,369.9 L689.7,370.4 L691.0,370.7 L692.3,371.0 L693.9,371.2 L695.9,371.2 L698.3,371.1 L700.9,370.8 L703.3,370.6 L705.4,370.3 L706.9,370.2 L762.3,361.2 L763.2,340.0 L763.2,251.0" fill="none" stroke="#62e6e6" stroke-width="2.4"/>
<path d="M763.2,250.3 L776,249.6" fill="none" stroke="#62e6e6" stroke-width="1.6"/>
</g></svg>
<div id="app-ui" style="position:absolute;left:85px;top:85px;width:690px;height:690px;overflow:hidden;will-change:transform;">
<div id="title">
 <div class="blob" style="left:168px;width:60px"></div><div class="blob" style="left:244px;width:38px"></div><div class="blob" style="left:296px;width:9px"></div><div class="blob" style="left:324px;width:57px"></div><div class="blob" style="left:397px;width:26px"></div><div class="blob" style="left:453px;width:32px"></div>
 <div class="glow"></div><div class="shade"></div>
 <span id="ttext" style="left:529.2px;letter-spacing:-0.266px">Autodesk 3ds Max 2016</span><span id="ttext2" class="abs" style="left:667.4px;top:5px;font-size:11.9px;letter-spacing:-0.3px;color:#0b0b0b;white-space:nowrap">luno</span>
</div>
<div id="tline1"></div><div id="tline2"></div>
<div id="tleft"><div id="ws"><span style="letter-spacing:-0.151px">Workspace: Default</span></div><div id="qa"></div></div>
<div id="topline"></div>
<div id="menubar"><span style="left:5.0px;letter-spacing:-0.169px">Views</span><span style="left:59.7px;letter-spacing:-0.269px">Create</span><span style="left:117.8px;letter-spacing:0.138px">Modifiers</span><span style="left:191.5px;letter-spacing:0.258px">Animation</span><span style="left:271.8px;letter-spacing:-0.248px">Graph Editors</span><span style="left:366.6px;letter-spacing:-0.146px">Rendering</span><span style="left:439.7px;letter-spacing:-0.050px">Civil View</span><span style="left:510.0px;letter-spacing:-0.105px">Customize</span><span style="left:589.8px;letter-spacing:-0.029px">Scripting</span><span style="left:660.5px;letter-spacing:0.006px">Help</span></div>
<div id="toolbar"></div><div id="tbl1"></div><div id="tbl2"></div>
<div class="dd" style="left:-10px;width:55px;top:49.7px;height:19px"><i style="right:3.2px"></i></div>
<div class="dd" style="left:309.3px;width:68.8px"><i></i><span class="abs" style="left:1.8px;top:3.7px;font-size:10.8px;letter-spacing:-0.35px;color:#0a0a0a">View</span></div>
<div class="sep" style="left:178px"></div><div class="sep" style="left:414px"></div><div class="sep" style="left:484px"></div><div class="sep" style="left:618px"></div>
<div class="blue" style="left:181.8px;top:49.3px;width:30px;height:29px"></div>
<div class="blue" style="left:518.8px;top:48.8px;width:31.2px;height:30.6px;border-right-width:1.4px;border-bottom-width:1.4px"></div>
<div class="abs" style="left:653.2px;top:49.2px;width:40px;height:20.6px;background:#141414;"><div class="abs" style="left:2px;top:2px;width:40px;height:16.4px;background:#5a5a5a;border:1.1px solid #f2f2f2;box-sizing:border-box"><span class="abs" style="left:3.4px;top:1.2px;color:#161616;font-size:11.2px;letter-spacing:-0.1px">Create</span></div></div>
<svg class="abs" style="left:0;top:0" width="690" height="90" viewBox="85 85 690 90">
<defs>
<path id="cur" d="M0,0 L0,12.4 L2.9,9.7 L5.1,15 L7.3,14 L5,8.9 L8.9,8.7 Z"/>
<g id="mag"><path d="M1.4,11.2 L1.4,4.8 A3.4,3.4 0 0 1 8.2,4.8 L8.2,11.2" fill="none" stroke="#d8263c" stroke-width="2.7"/><path d="M1.4,8.6 L1.4,4.8 A3.4,3.4 0 0 1 8.2,4.8 L8.2,8.6" fill="none" stroke="#f08c98" stroke-width="0.9"/><path d="M0.05,8.8 h2.7 v2.6 h-2.7z M6.85,8.8 h2.7 v2.6 h-2.7z" fill="#f4f4f4"/></g>
<path id="fly" d="M0,2.6 L2.8,0" stroke="#f2f2f2" stroke-width="1.3" fill="none"/>
<radialGradient id="gsp" cx="0.38" cy="0.32" r="0.75"><stop offset="0" stop-color="#ffffff"/><stop offset="0.5" stop-color="#ececec"/><stop offset="0.85" stop-color="#9a9a9a"/><stop offset="1" stop-color="#5c5c5c"/></radialGradient>
<radialGradient id="gbl" cx="0.4" cy="0.35" r="0.7"><stop offset="0" stop-color="#e8fbff"/><stop offset="0.5" stop-color="#7cc4ea"/><stop offset="1" stop-color="#2f7fc4"/></radialGradient>
<linearGradient id="gpv" x1="0" y1="0" x2="0" y2="1"><stop offset="0" stop-color="#8e949e"/><stop offset="1" stop-color="#d6d6d6"/></linearGradient>
<linearGradient id="gkey" x1="0" y1="0" x2="0" y2="1"><stop offset="0" stop-color="#ffffff"/><stop offset="1" stop-color="#e4e4e4"/></linearGradient>
</defs>
<!-- title: left doc icon -->
<path d="M83,90.6 h6.4 v3.4 h2 v10.2 h-8.4z" fill="#fbfbfb" stroke="#1c1c1c" stroke-width="1.1"/>
<rect x="85" y="96.8" width="4.6" height="1.7" fill="#1f5f9c"/><path d="M86,101.3 h3.4 M88.2,100 l1.4,1.3 l-1.4,1.3" stroke="#1c3c6c" stroke-width="0.9" fill="none"/>
<!-- workspace arrow / QA icon -->
<path d="M216.4,94.6 h4.2 l-2.1,2.6z" fill="#111"/>
<rect x="230" y="92.6" width="8" height="1.7" fill="#2a2a2a"/><path d="M230,95.9 h8 l-4,4.1z" fill="#2a2a2a"/>
<!-- select object -->
<path d="M140.4,137.6 H153.4 V153.4 H137.8 V140.4 Z" fill="#fdfdfd" stroke="#fdfdfd" stroke-width="0.8"/>
<path d="M139,142.4 H149.4 V152.4 H139 Z" fill="#dcdcdc"/><path d="M149.4,142.4 L152.8,139 V152.6 H149.4Z" fill="#b4b4b4"/>
<use href="#cur" x="148.3" y="143.6" fill="#fff" stroke="#2c2c2c" stroke-width="0.9"/>
<!-- select by name -->
<path d="M168,137.6 h12 M168,140.5 h8 M168,143.5 h12 M168,146.5 h8 M168,149.5 h12 M168,152.4 h8" stroke="#fbfbfb" stroke-width="1.25" fill="none"/>
<use href="#cur" x="181.9" y="144" fill="#fff" stroke="#2c2c2c" stroke-width="0.9"/>
<!-- rect region -->
<rect x="200.6" y="137.9" width="22" height="21.3" fill="none" stroke="#fcfcfc" stroke-width="1.35" stroke-dasharray="2.1 1.25"/>
<use href="#fly" x="223.3" y="159.2"/>
<!-- window crossing -->
<rect x="232.7" y="137.9" width="15.6" height="21.3" fill="none" stroke="#fcfcfc" stroke-width="1.35" stroke-dasharray="2.1 1.25"/>
<path d="M246.2,143.6 H254.2 V152 L252.2,154.4 H244 V146Z" fill="#fdfdfd" stroke="#333" stroke-width="0.8"/>
<path d="M245,146.8 h6.4 v6.6 h-6.4z" fill="#dadada"/><path d="M251.4,146.8 l2.2,-2.4 v7.4 l-2.2,2.4z" fill="#bdbdbd"/>
<!-- move -->
<g fill="#fdfdfd"><path d="M282.5,137.6 l3.4,4.4 h-2 v3.2 h-2.8 v-3.2 h-2z"/><path d="M282.5,161.4 l3.4,-4.4 h-2 v-3.2 h-2.8 v3.2 h-2z"/><path d="M270.9,149.5 l4.4,-3.4 v2 h3.2 v2.8 h-3.2 v2z"/><path d="M294.1,149.5 l-4.4,-3.4 v2 h-3.2 v2.8 h3.2 v2z"/></g>
<rect x="280.2" y="147.2" width="4.6" height="4.6" fill="#fff" stroke="#0e1830" stroke-width="1.3"/>
<!-- rotate -->
<path d="M319.6,141.6 A10.1,10.1 0 1 1 311.2,139.7" fill="none" stroke="#fdfdfd" stroke-width="1.9"/>
<path d="M310.2,136.4 L316.6,140.2 L310.6,143.6Z" fill="#fdfdfd"/>
<!-- scale -->
<rect x="336" y="138" width="21" height="20.6" fill="#bcdcf0" stroke="#3d6a90" stroke-width="0.7"/>
<rect x="336" y="148.6" width="10.2" height="10" fill="#e4e4e4" stroke="#1a1a1a" stroke-width="1"/><rect x="337" y="149.6" width="8.2" height="8" fill="none" stroke="#fff" stroke-width="1"/>
<path d="M348.2,146.6 L354,140.8" stroke="#111" stroke-width="1.3"/><path d="M351.4,139.8 h4 v4z" fill="#111"/>
<use href="#fly" x="356.6" y="159.6"/>
<!-- sphere place -->
<circle cx="375.3" cy="150.2" r="8.3" fill="url(#gsp)"/>
<circle cx="384.4" cy="141.2" r="4.5" fill="url(#gbl)"/>
<path d="M384.6,146.6 v8 M380.6,150.6 h8" stroke="#2a2a2a" stroke-width="2.6"/>
<path d="M384.6,146.4 v8.4 M380.4,150.6 h8.4" stroke="#fff" stroke-width="1.2"/><path d="M384.6,145 l1.7,1.9 h-3.4z M384.6,156.2 l1.7,-1.9 h-3.4z M379,150.6 l1.9,-1.7 v3.4z M390.2,150.6 l-1.9,-1.7 v3.4z" fill="#fff"/>
<use href="#fly" x="388.4" y="159.6"/>
<!-- pivot -->
<rect x="468.8" y="138.8" width="9" height="20" fill="url(#gpv)" stroke="#e6e6e6" stroke-width="0.8"/>
<rect x="482.8" y="144" width="8.4" height="9.6" fill="#fafafa" stroke="#cfcfcf" stroke-width="0.6"/>
<path d="M480.4,146 v6.4 M477.2,149.2 h6.4" stroke="#d4142c" stroke-width="1.5"/><circle cx="480.4" cy="149.2" r="1.7" fill="#d4142c"/>
<use href="#fly" x="490.6" y="159.4"/>
<!-- gizmo -->
<path d="M517.4,143.4 v10.6 M512,148.6 h10.8" stroke="#fdfdfd" stroke-width="1.25"/>
<circle cx="517.2" cy="139.8" r="2.4" fill="#7cd25a"/><circle cx="508.5" cy="148.8" r="2.3" fill="#f8f8f8"/><circle cx="526.2" cy="148.4" r="2.3" fill="#f8f8f8"/><circle cx="518" cy="157.2" r="2.3" fill="#f8f8f8"/>
<!-- key -->
<rect x="538.8" y="138.8" width="21.4" height="18.4" rx="2.4" fill="#9c9c9c"/><rect x="539.3" y="139.2" width="20.4" height="14.2" rx="2.2" fill="url(#gkey)"/>
<path d="M549.5,141.4 l5.2,4.8 h-2.8 v3.6 h-4.8 v-3.6 h-2.8z" fill="#161616"/>
<!-- 3 snap -->
<text x="576.6" y="149.8" font-family="Liberation Sans, sans-serif" font-size="16.2" fill="#f4f4f4">3</text>
<use href="#mag" x="589.3" y="147"/>
<use href="#fly" x="598.6" y="159.6"/>
<!-- angle snap (on blue) -->
<use href="#mag" x="608.7" y="148.8"/>
<path d="M612.8,148 L622.9,137.8 M620.4,158.4 H633.6" stroke="#f6f6f6" stroke-width="1.2" fill="none"/>
<path d="M622.6,141.2 Q628,147 628.6,156.4" stroke="#f6f6f6" stroke-width="1.1" fill="none"/>
<path d="M621.6,140.2 l3.8,0.6 l-2.4,2.6z M628.7,158 l-2.1,-3.2 l4,-0.2z" fill="#f6f6f6"/>
<!-- percent snap -->
<text x="639.2" y="149.8" font-family="Liberation Sans, sans-serif" font-size="15.4" fill="#f4f4f4" textLength="13.6" lengthAdjust="spacingAndGlyphs">%</text>
<use href="#mag" x="653.5" y="148.6"/>
<!-- spinner snap -->
<rect x="672.9" y="138" width="9" height="8" fill="#f8f8f8"/><rect x="672.9" y="147.2" width="9" height="8" fill="#f8f8f8"/>
<path d="M677.4,139.8 l3.2,4.2 h-6.4z M677.4,153.4 l3.2,-4.2 h-6.4z" fill="#161616"/>
<use href="#mag" x="685.4" y="148.6"/>
<!-- {} ABC pencil -->
<text x="709" y="150.4" font-family="Liberation Sans, sans-serif" font-size="17.6" fill="#f4f4f4" textLength="14.6" lengthAdjust="spacing">{}</text>
<text x="711" y="160.1" font-family="Liberation Sans, sans-serif" font-size="6.6" font-weight="bold" fill="#f4f4f4" textLength="15" lengthAdjust="spacingAndGlyphs">ABC</text>
<g transform="translate(721.4,150) rotate(-46)"><path d="M0,0 L3.4,-2.1 H13.4 V2.1 H3.4Z" fill="#f2d84a"/><path d="M0,0 L3.4,-2.1 V2.1Z" fill="#fafafa"/><rect x="13.4" y="-2.1" width="2.6" height="4.2" fill="#e0904c"/><path d="M3.4,-0.7 H13.4" stroke="#fff6a8" stroke-width="1.1"/></g>
</svg>

<div class="abs" style="left:0;top:86px;width:2.7px;height:604px;background:#161616"></div><div class="abs" style="left:0;top:96.6px;width:3px;height:1.2px;background:#f0f0f0"></div><div class="abs" style="left:1px;top:93.6px;width:1.3px;height:7.4px;background:#f0f0f0"></div><div class="abs" style="left:0;top:689.3px;width:690px;height:0.7px;background:rgba(10,10,10,.75)"></div><div class="abs" style="left:0;top:688.7px;width:314px;height:1.3px;background:#121212"></div>
<div class="abs" style="left:689.3px;top:0;width:0.7px;height:690px;background:rgba(0,0,0,.8)"></div>
<div id="popup"><div class="gut"></div><div class="hr"></div>
<span class="mi" style="top:5.9px;letter-spacing:-0.013px">Customize...</span>
<div class="ck" style="top:32.2px"><svg width="19" height="19" viewBox="0 0 19 19"><path d="M5.3,9.7 L8.2,13.9 L13.5,4.4" fill="none" stroke="#0c1166" stroke-width="1.75" stroke-linejoin="miter"/></svg></div><span class="mi" style="top:35.7px;letter-spacing:0.164px">Command Panel</span>
<div class="ck" style="top:54.2px"><svg width="19" height="19" viewBox="0 0 19 19"><path d="M5.3,9.7 L8.2,13.9 L13.5,4.4" fill="none" stroke="#0c1166" stroke-width="1.75" stroke-linejoin="miter"/></svg></div><span class="mi" style="top:57.7px;letter-spacing:0.391px">Main Toolbar</span>
<span class="mi" style="top:79.7px;letter-spacing:-0.028px">Axis Constraints</span>
<span class="mi" style="top:101.7px;letter-spacing:-0.332px">Layers</span>
<span class="mi" style="top:123.7px;letter-spacing:-0.414px">State Sets</span>
<span class="mi" style="top:145.7px;letter-spacing:-0.537px">Extras</span>
<span class="mi" style="top:167.7px;letter-spacing:-0.066px">Render Shortcuts</span>
<span class="mi" style="top:189.7px;letter-spacing:-0.348px">Snaps</span>
<span class="mi" style="top:211.7px;letter-spacing:0.105px">Animation Layers</span>
<span class="mi" style="top:233.7px;letter-spacing:0.067px">Containers</span>
<span class="mi" style="top:255.7px;letter-spacing:-0.017px">MassFX Toolbar</span>
<div class="ck" style="top:274.2px"><svg width="19" height="19" viewBox="0 0 19 19"><path d="M5.3,9.7 L8.2,13.9 L13.5,4.4" fill="none" stroke="#0c1166" stroke-width="1.75" stroke-linejoin="miter"/></svg></div><span class="mi" style="top:277.7px;letter-spacing:0.161px">V-Ray Toolbar</span>
<div class="ck" style="top:296.2px"><svg width="19" height="19" viewBox="0 0 19 19"><path d="M5.3,9.7 L8.2,13.9 L13.5,4.4" fill="none" stroke="#0c1166" stroke-width="1.75" stroke-linejoin="miter"/></svg></div><span class="mi" style="top:299.7px;letter-spacing:-0.087px">RenderMask</span>
<span class="mi" style="top:321.7px;letter-spacing:-0.929px">SBO</span>
<span class="mi" style="top:343.7px;letter-spacing:0.009px">derbis</span>
<div class="ck" style="top:362.2px"><svg width="19" height="19" viewBox="0 0 19 19"><path d="M5.3,9.7 L8.2,13.9 L13.5,4.4" fill="none" stroke="#0c1166" stroke-width="1.75" stroke-linejoin="miter"/></svg></div><span class="mi" style="top:365.7px;letter-spacing:0.009px">debris</span>
<div class="ck" style="top:384.2px"><svg width="19" height="19" viewBox="0 0 19 19"><path d="M5.3,9.7 L8.2,13.9 L13.5,4.4" fill="none" stroke="#0c1166" stroke-width="1.75" stroke-linejoin="miter"/></svg></div><span class="mi" style="top:387.7px;letter-spacing:-0.097px">VertexCln</span>
<div class="ck" style="top:406.2px"><svg width="19" height="19" viewBox="0 0 19 19"><path d="M5.3,9.7 L8.2,13.9 L13.5,4.4" fill="none" stroke="#0c1166" stroke-width="1.75" stroke-linejoin="miter"/></svg></div><span class="mi" style="top:409.7px;letter-spacing:-0.632px">SmEd</span>
<div class="ck" style="top:428.2px"><svg width="19" height="19" viewBox="0 0 19 19"><path d="M5.3,9.7 L8.2,13.9 L13.5,4.4" fill="none" stroke="#0c1166" stroke-width="1.75" stroke-linejoin="miter"/></svg></div><span class="mi" style="top:431.7px;letter-spacing:-0.175px">CAD_cln</span>
<div class="ck" style="top:450.2px"><svg width="19" height="19" viewBox="0 0 19 19"><path d="M5.3,9.7 L8.2,13.9 L13.5,4.4" fill="none" stroke="#0c1166" stroke-width="1.75" stroke-linejoin="miter"/></svg></div><span class="mi" style="top:453.7px;letter-spacing:0.070px">Weld</span>
<div class="ck" style="top:472.2px"><svg width="19" height="19" viewBox="0 0 19 19"><path d="M5.3,9.7 L8.2,13.9 L13.5,4.4" fill="none" stroke="#0c1166" stroke-width="1.75" stroke-linejoin="miter"/></svg></div><span class="mi" style="top:475.7px;letter-spacing:0.082px">spl</span>
<div class="ck" style="top:494.2px"><svg width="19" height="19" viewBox="0 0 19 19"><path d="M5.3,9.7 L8.2,13.9 L13.5,4.4" fill="none" stroke="#0c1166" stroke-width="1.75" stroke-linejoin="miter"/></svg></div><span class="mi" style="top:497.7px;letter-spacing:0.249px">Corona Official Toolbar</span>
<span class="mi" style="top:519.7px;letter-spacing:0.142px">Ribbon</span>
<span class="mi" style="top:541.7px;letter-spacing:0.144px">Viewport Layout Tabs</span>
<span class="mi" style="top:563.7px;letter-spacing:-0.247px">Brush Presets</span>
</div>
<svg id="redline" class="abs" style="left:0;top:0" width="690" height="690"><path d="M18.4,616.5 L20.5,615.1 L24.0,614.4 L37.9,613.0 L51.9,612.0 L79.8,611.3 L107.7,610.9 L112.6,611.3 L114.9,612.6 L115.9,614.8 L115.3,616.8 L113.3,618.2 L107.7,619.0 L79.8,619.7 L51.9,620.4 L24.0,620.6 L20.5,619.9 L18.4,618.5 L17.8,617.5Z" fill="#f20d0d" stroke="#f20d0d" stroke-width="1" stroke-linejoin="round"/></svg>
</div>
</body></html>
